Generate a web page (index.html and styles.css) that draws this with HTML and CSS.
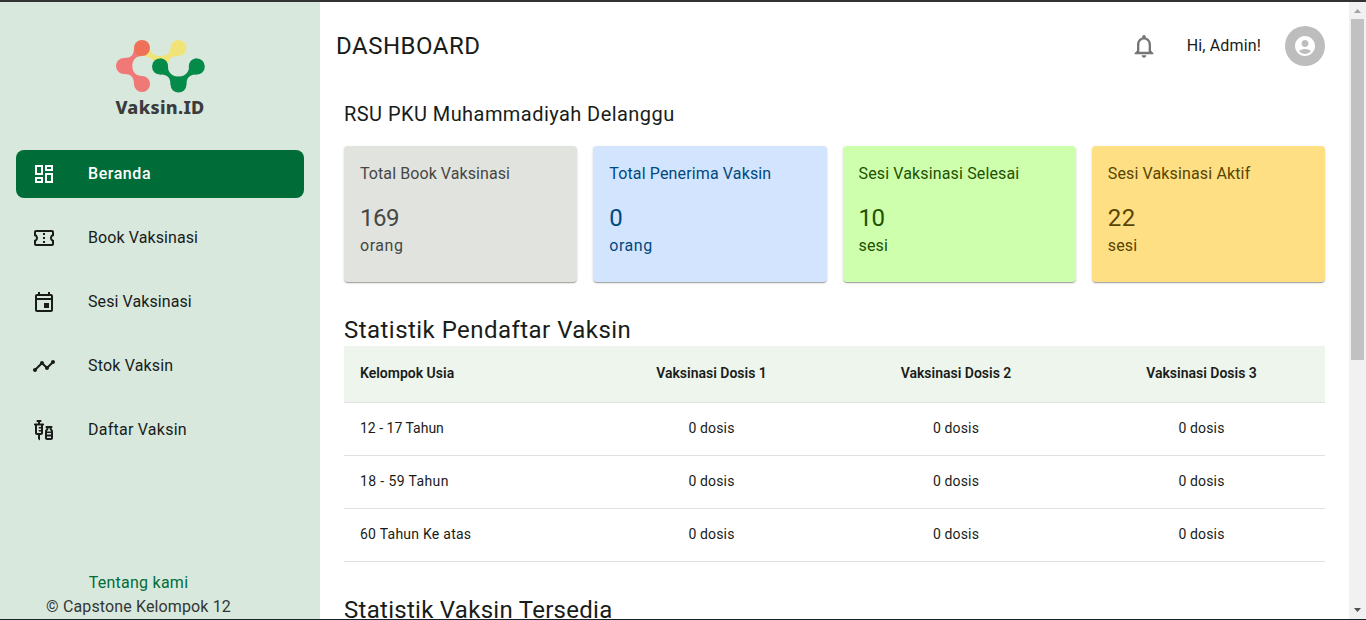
FILE: index.html
```html
<!DOCTYPE html>
<html lang="id">
<head>
<meta charset="utf-8">
<title>Vaksin.ID - Dashboard</title>
<link rel="stylesheet" href="styles.css">
</head>
<body>
<div class="app">
  <aside class="sidebar">
    <div class="brand">
      <svg class="brand-mark" viewBox="0 0 92 56" width="92" height="56">
        <g fill="#f07876">
          <circle cx="10" cy="28" r="8"/><circle cx="28" cy="46" r="8"/>
          <path d="M10 20C17 20 20 17 20 10L28 18C22 18 18.300 22 18.300 28C18.300 34 22 38 28 38L20 46C20 39 17 36 10 36Z"/>
        </g>
        <path fill="#f0e478" d="M28 10L36 11C37 16 42 18 46 18C53 18 56 15 56.500 10L64.500 18C57 18 54 21 54 28L40 26C40 21 35 18 28 18Z"/>
        <circle cx="64.500" cy="10" r="8" fill="#f0e478"/>
        <circle cx="28" cy="10" r="8" fill="#ee7058"/>
        <g fill="#048b4a">
          <circle cx="46" cy="28.500" r="8"/><circle cx="82.800" cy="28.500" r="8"/><circle cx="64.500" cy="46.500" r="8"/>
          <path d="M46 20.500C52 20.500 54 25 54 29C54 35 59 38.700 64.500 38.700C70 38.700 75 35 75 29C75 25 77 20.500 83 20.500V36.500C76 36.500 72.500 39 72.500 46.500H56.500C56.500 39 53 36.500 46 36.500Z"/>
        </g>
      </svg>
      <span class="brand-name">Vaksin.ID</span>
    </div>
    <nav class="menu">
      <a class="item active"><svg class="icon" viewBox="0 0 24 24"><path d="M19 5v2h-4V5h4M9 5v6H5V5h4m10 8v6h-4v-6h4M9 17v2H5v-2h4M21 3h-8v6h8V3zM11 3H3v10h8V3zm10 8h-8v10h8V11zm-10 4H3v6h8v-6z"/></svg><span class="t-beranda">Beranda</span></a>
      <a class="item"><svg class="icon" viewBox="0 0 24 24"><path d="M22 10V6c0-1.110-.9-2-2-2H4c-1.100 0-1.990.89-1.990 2v4c1.100 0 1.990.9 1.990 2s-.89 2-2 2v4c0 1.100.9 2 2 2h16c1.100 0 2-.9 2-2v-4c-1.100 0-2-.9-2-2s.9-2 2-2zm-2-1.460c-1.190.69-2 1.990-2 3.460s.81 2.770 2 3.460V18H4v-2.540c1.190-.69 2-1.990 2-3.460 0-1.480-.8-2.770-1.990-3.460L4 6h16v2.540zM11 15h2v2h-2zm0-4h2v2h-2zm0-4h2v2h-2z"/></svg><span class="t-book">Book Vaksinasi</span></a>
      <a class="item"><svg class="icon" viewBox="0 0 24 24"><path d="M19 4h-1V2h-2v2H8V2H6v2H5c-1.110 0-1.990.9-1.990 2L3 20c0 1.100.89 2 2 2h14c1.100 0 2-.9 2-2V6c0-1.100-.9-2-2-2zm0 16H5V10h14v10zm0-12H5V6h14v2zm-7 5h5v5h-5z"/></svg><span class="t-book">Sesi Vaksinasi</span></a>
      <a class="item"><svg class="icon" viewBox="0 0 24 24"><path d="M23 8c0 1.100-.9 2-2 2-.18 0-.35-.02-.51-.07l-3.560 3.550c.05.16.07.34.07.52 0 1.100-.9 2-2 2s-2-.9-2-2c0-.18.02-.36.07-.52l-2.550-2.550c-.16.05-.34.07-.52.07s-.36-.02-.52-.07l-4.550 4.560c.05.16.07.33.07.51 0 1.100-.9 2-2 2s-2-.9-2-2 .9-2 2-2c.18 0 .35.02.51.07l4.560-4.550C8.020 9.360 8 9.180 8 9c0-1.100.9-2 2-2s2 .9 2 2c0 .18-.02.36-.07.52l2.550 2.550c.16-.05.34-.07.52-.07s.36.02.52.07l3.550-3.560C19.020 8.350 19 8.180 19 8c0-1.100.9-2 2-2s2 .9 2 2z"/></svg><span class="t-stok">Stok Vaksin</span></a>
      <a class="item"><svg class="icon" viewBox="0 0 24 24"><path d="M11 5.500H8V4h.5c.55 0 1-.45 1-1s-.45-1-1-1h-3c-.55 0-1 .45-1 1s.45 1 1 1H6v1.500H3c-.55 0-1 .45-1 1s.45 1 1 1V15c0 1.100.9 2 2 2h1v4l2 1.500V17h1c1.100 0 2-.9 2-2V7.500c.55 0 1-.45 1-1s-.45-1-1-1zM9 9H7.250c-.41 0-.75.34-.75.75s.34.75.75.75H9V12H7.250c-.41 0-.75.34-.75.75s.34.75.75.75H9V15H5V7.500h4V9zM19.500 10.500V10c.55 0 1-.45 1-1s-.45-1-1-1h-5c-.55 0-1 .45-1 1s.45 1 1 1v.5c0 .5-1.500 1.160-1.500 3V20c0 1.100.9 2 2 2h4c1.100 0 2-.9 2-2v-6.500c0-1.840-1.500-2.500-1.500-3zM16.500 10h1v.5c0 1.600 1.500 2 1.500 3h-4c0-1 1.500-1.400 1.500-3V10zM19 15v1.500h-4V15h4zm-4 5v-1.500h4V20h-4z"/></svg><span class="t-daftar">Daftar Vaksin</span></a>
    </nav>
    <footer class="side-footer">
      <a class="about">Tentang kami</a>
      <span class="copy">© Capstone Kelompok 12</span>
    </footer>
  </aside>
  <main class="main">
    <header class="topbar">
      <h1 class="title">DASHBOARD</h1>
      <svg class="bell" viewBox="0 0 24 24"><path d="M12 22c1.100 0 2-.9 2-2h-4c0 1.100.9 2 2 2zm6-6v-5c0-3.070-1.630-5.640-4.500-6.320V4c0-.83-.67-1.500-1.500-1.500s-1.500.67-1.500 1.500v.68C7.640 5.360 6 7.920 6 11v5l-2 2v1h16v-1l-2-2zm-2 1H8v-6c0-2.480 1.510-4.500 4-4.500s4 2.020 4 4.500v6z"/></svg>
      <span class="hello">Hi, Admin!</span>
      <div class="avatar"><svg class="icon" viewBox="0 0 24 24"><path d="M12 2C6.480 2 2 6.480 2 12s4.480 10 10 10 10-4.480 10-10S17.520 2 12 2zm0 4c1.930 0 3.500 1.570 3.500 3.500S13.930 13 12 13s-3.500-1.570-3.500-3.500S10.070 6 12 6zm0 14c-2.030 0-4.430-.82-6.140-2.880C7.550 15.800 9.680 15 12 15s4.450.8 6.140 2.120C16.430 19.180 14.030 20 12 20z"/></svg></div>
    </header>
    <section class="content">
      <h2 class="hospital">RSU PKU Muhammadiyah Delanggu</h2>
      <div class="cards">
        <div class="card gray"><span class="label first">Total Book Vaksinasi</span><span class="num tight">169</span><span class="unit wide">orang</span></div>
        <div class="card blue"><span class="label">Total Penerima Vaksin</span><span class="num">0</span><span class="unit wide">orang</span></div>
        <div class="card green"><span class="label">Sesi Vaksinasi Selesai</span><span class="num tight">10</span><span class="unit">sesi</span></div>
        <div class="card yellow"><span class="label">Sesi Vaksinasi Aktif</span><span class="num">22</span><span class="unit">sesi</span></div>
      </div>
      <h3 class="section-title s1">Statistik Pendaftar Vaksin</h3>
      <div class="table">
        <div class="row head"><span>Kelompok Usia</span><span>Vaksinasi Dosis 1</span><span>Vaksinasi Dosis 2</span><span>Vaksinasi Dosis 3</span></div>
        <div class="row"><span class="young">12 - 17 Tahun</span><span>0 dosis</span><span>0 dosis</span><span>0 dosis</span></div>
        <div class="row"><span class="adult">18 - 59 Tahun</span><span>0 dosis</span><span>0 dosis</span><span>0 dosis</span></div>
        <div class="row"><span class="senior">60 Tahun Ke atas</span><span>0 dosis</span><span>0 dosis</span><span>0 dosis</span></div>
      </div>
      <h3 class="section-title s2">Statistik Vaksin Tersedia</h3>
    </section>
  </main>
  <div class="scrollbar">
    <svg class="arrow" viewBox="0 0 17 17"><path fill="#a3a3a3" d="M5 11h7L8.500 7z"/></svg>
    <div class="thumb"></div>
    <svg class="arrow" viewBox="0 0 17 17"><path fill="#505050" d="M5 6h7L8.500 10z"/></svg>
  </div>
</div>
</body>
</html>
```
FILE: styles.css
```css
* { box-sizing: border-box; }
body { margin: 0; overflow: hidden; background: #fff; color: #191c19; font-family: Roboto, "Liberation Sans", sans-serif; font-size: 16px; line-height: 24px; }
h1, h2, h3 { margin: 0; font-weight: 400; }
span, a, h1, h2, h3 { white-space: nowrap; }
.app { display: flex; width: 1366px; height: 620px; overflow: hidden; border-top: 2px solid #333132; border-bottom: 1px solid #17202b; }
.sidebar { width: 320px; flex: none; background: #d8e8dd; display: flex; flex-direction: column; }
.brand { height: 148px; padding-top: 36px; display: flex; flex-direction: column; align-items: center; }
.brand-mark { flex: none; display: block; }
.brand-name { font-family: "Noto Sans", sans-serif; font-weight: 800; font-size: 18px; line-height: 24px; letter-spacing: .3px; color: #3b3b3b; margin-top: 1px; }
.menu { padding: 0 16px; display: flex; flex-direction: column; gap: 16px; }
.item { height: 48px; padding-left: 16px; border-radius: 8px; display: flex; align-items: center; gap: 32px; }
.item.active { background: #006d38; color: #fff; font-weight: 500; }
.t-beranda { letter-spacing: .55px; }
.t-book { letter-spacing: .09px; }
.t-stok { letter-spacing: .18px; }
.t-daftar { letter-spacing: .24px; }
.icon { width: 24px; height: 24px; fill: currentColor; flex: none; }
.side-footer { margin-top: auto; width: 277px; display: flex; flex-direction: column; align-items: center; height: 48px; color: #333633; }
.about { color: #006d38; letter-spacing: .25px; }
.copy { letter-spacing: .13px; }
.main { flex: 1; min-width: 0; display: flex; flex-direction: column; overflow: hidden; }
.topbar { height: 88px; flex: none; padding: 0 24px 0 16px; display: flex; align-items: center; }
.title { font-size: 24px; line-height: 32px; margin-right: auto; letter-spacing: .5px; }
.bell { width: 28px; height: 28px; fill: #757575; margin-right: 29px; }
.hello { margin-right: 24px; letter-spacing: .15px; }
.avatar { width: 40px; height: 40px; border-radius: 50%; background: #bdbdbd; color: #fff; display: flex; align-items: center; justify-content: center; }
.content { padding: 8px 24px 0; display: flex; flex-direction: column; }
.hospital { font-size: 20px; line-height: 32px; letter-spacing: .44px; }
.cards { margin-top: 16px; display: grid; grid-template-columns: repeat(4, 1fr); gap: 16px; }
.card { height: 136px; border-radius: 4px; padding: 16px; display: flex; flex-direction: column; align-items: flex-start; box-shadow: 0 2px 1px -1px rgba(0,0,0,.2), 0 1px 1px rgba(0,0,0,.14), 0 1px 3px rgba(0,0,0,.12); }
.gray { background: #e1e3de; color: #454744; }
.blue { background: #d3e4ff; color: #00497e; }
.green { background: #cdffad; color: #225100; }
.yellow { background: #ffdf84; color: #574500; }
.label, .unit { letter-spacing: .14px; }
.label.first { letter-spacing: .08px; }
.unit.wide { letter-spacing: .55px; }
.num { font-size: 24px; line-height: 32px; margin-top: 16px; letter-spacing: .5px; }
.num.tight { letter-spacing: -.5px; }
.section-title { font-size: 24px; line-height: 32px; margin-top: 32px; }
.s1 { letter-spacing: .46px; }
.s2 { letter-spacing: .28px; }
.row { display: grid; grid-template-columns: 245px 245px 244px 247px; height: 53px; align-items: center; border-bottom: 1px solid #e0e0e0; padding-bottom: 2px; font-size: 14px; line-height: 20px; letter-spacing: .15px; }
.row span { text-align: center; }
.row span:first-child { text-align: left; padding-left: 16px; }
.row.head { height: 57px; background: #edf5ed; font-weight: 600; letter-spacing: 0; }
.young { letter-spacing: 0; }
.adult { letter-spacing: .38px; }
.senior { letter-spacing: .25px; }
.scrollbar { width: 17px; flex: none; background: #f1f1f1; display: flex; flex-direction: column; align-items: center; }
.arrow { width: 17px; height: 17px; flex: none; display: block; }
.thumb { width: 13px; height: 341px; background: #c1c1c1; margin-bottom: auto; }
```
